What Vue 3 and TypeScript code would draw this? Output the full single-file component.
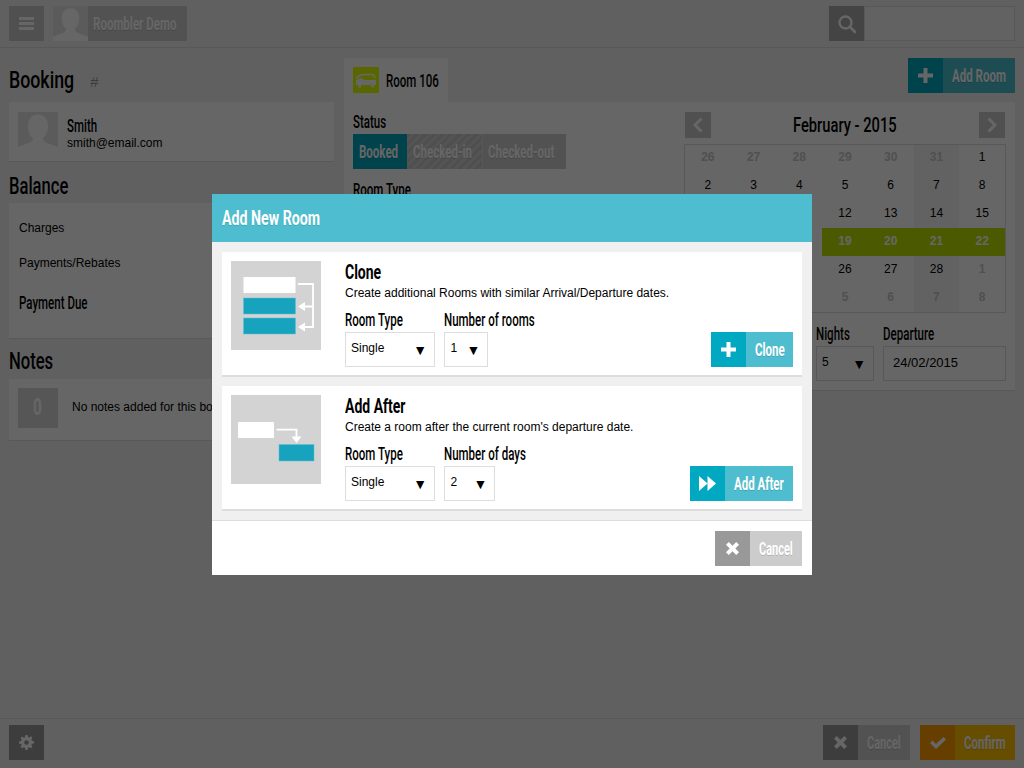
<script setup lang="ts">
interface Day { n: number; muted?: boolean; weekend?: boolean; on?: boolean }
const weeks: Day[][] = [
  [26, 27, 28, 29, 30, 31, 1],
  [2, 3, 4, 5, 6, 7, 8],
  [9, 10, 11, 12, 13, 14, 15],
  [16, 17, 18, 19, 20, 21, 22],
  [23, 24, 25, 26, 27, 28, 1],
  [2, 3, 4, 5, 6, 7, 8],
].map((row, r) =>
  row.map((n, c) => ({
    n,
    muted: r === 0 ? c < 6 : r === 4 ? c === 6 : r === 5,
    weekend: c === 5,
    on: r === 3 && c >= 3,
  })),
)
const days = weeks.flat()
</script>

<template>
  <div class="page">
    <header class="top">
      <div class="btn-icon menu">
        <svg width="15" height="13" viewBox="0 0 15 13"><path d="M0 0h15v3H0zM0 5h15v3H0zM0 10h15v3H0z" fill="#fff" /></svg>
      </div>
      <div class="brand">
        <svg class="avatar" viewBox="0 0 40 40"><rect width="40" height="40" fill="#e4e4e4" /><path d="M0 40V35l12-4.500c2-1 3-2 3-4.500-3-2-5-6-5-12C10 7 14 2.500 20 2.500S30 7 30 14c0 6-2 10-5 12 0 2.500 1 3.500 3 4.500l12 4.500v5z" fill="#fff" /></svg>
        <span class="brand-name"><span class="cond bold">Roombler Demo</span></span>
      </div>
      <div class="search">
        <div class="btn-icon search-btn">
          <svg width="20" height="20" viewBox="0 0 20 20"><circle cx="8.500" cy="8.500" r="6" fill="none" stroke="#fff" stroke-width="2.400" /><path d="M13 13l5 5" stroke="#fff" stroke-width="2.800" stroke-linecap="round" /></svg>
        </div>
        <div class="search-input"></div>
      </div>
    </header>

    <main class="main">
      <section class="left">
        <div class="h-row"><h1 class="cond h1 booking">Booking</h1><span class="hash">#</span></div>
        <div class="card guest">
          <svg class="thumb" viewBox="0 0 40 40"><rect width="40" height="40" fill="#e4e4e4" /><path d="M0 40V35l12-4.500c2-1 3-2 3-4.500-3-2-5-6-5-12C10 7 14 2.500 20 2.500S30 7 30 14c0 6-2 10-5 12 0 2.500 1 3.500 3 4.500l12 4.500v5z" fill="#fff" /></svg>
          <div>
            <div class="cond guest-name">Smith</div>
            <div class="sans email">smith@email.com</div>
          </div>
        </div>
        <h2 class="cond h1 h-balance">Balance</h2>
        <div class="card balance">
          <div class="sans bal-row">Charges</div>
          <div class="sans bal-row">Payments/Rebates</div>
          <div class="cond bal-due">Payment Due</div>
        </div>
        <h2 class="cond h1 h-notes">Notes</h2>
        <div class="card notes">
          <div class="count"><span class="cond bold">0</span></div>
          <div class="sans notes-text">No notes added for this booking</div>
        </div>
      </section>

      <section class="right">
        <div class="room-head">
          <div class="room-tab">
            <div class="bed">
              <svg width="22" height="15" viewBox="0 0 22 15"><path d="M1 5.500C4 2.500 6 1.500 9 1.500h9l2.500 3.500" fill="none" stroke="#fff" stroke-width="1.400" /><path d="M1 7l5-2 4 2h11v5h-2v2.500h-2.500V12H6v2.500H3.500V12H1z" fill="#fff" /></svg>
            </div>
            <span class="cond room-name">Room 106</span>
          </div>
          <div class="btn teal">
            <span class="ico"><svg width="15" height="15" viewBox="0 0 15 15"><path d="M5.500 0h4v5.500H15v4H9.500V15h-4V9.500H0v-4h5.500z" fill="#fff" /></svg></span>
            <span class="lab w-addroom"><span class="cond bold">Add Room</span></span>
          </div>
        </div>
        <div class="card room-card">
          <div class="room-col">
            <div class="cond label">Status</div>
            <div class="segments">
              <span class="seg seg-on"><span class="cond bold">Booked</span></span>
              <span class="seg seg-in"><span class="cond bold">Checked-in</span></span>
              <span class="seg seg-out"><span class="cond bold">Checked-out</span></span>
            </div>
            <div class="cond label room-type">Room Type</div>
          </div>
          <div class="room-col">
            <div class="cal-head">
              <span class="nav"><svg width="10" height="16" viewBox="0 0 10 16"><path d="M8.500 1.500L2 8l6.500 6.500" fill="none" stroke="#fff" stroke-width="3" /></svg></span>
              <span class="cal-title"><span class="cond month">February - 2015</span></span>
              <span class="nav"><svg width="10" height="16" viewBox="0 0 10 16"><path d="M1.500 1.500L8 8l-6.500 6.500" fill="none" stroke="#fff" stroke-width="3" /></svg></span>
            </div>
            <div class="cal sans">
              <span v-for="(d, i) in days" :key="i" class="day" :class="{ muted: d.muted, weekend: d.weekend, on: d.on }">{{ d.n }}</span>
            </div>
            <div class="dates">
              <div class="nights">
                <div class="cond label">Nights</div>
                <div class="select sans"><span>5</span><span class="arrow">▼</span></div>
              </div>
              <div class="departure">
                <div class="cond label">Departure</div>
                <div class="select date sans">24/02/2015</div>
              </div>
            </div>
          </div>
        </div>
      </section>
    </main>

    <footer class="bottom">
      <div class="btn-icon gear">
        <svg width="15" height="15" viewBox="0 0 16 16"><path d="M6.800 0h2.400l.4 2.100 1.300.5 1.800-1.200 1.700 1.700-1.200 1.800.5 1.300 2.300.4v2.400l-2.300.4-.5 1.300 1.200 1.800-1.700 1.700-1.800-1.200-1.300.5-.4 2.400H6.800l-.4-2.400-1.300-.5-1.800 1.200-1.700-1.700 1.200-1.800-.5-1.300L0 9.200V6.800l2.300-.4.500-1.300-1.200-1.800 1.700-1.700 1.800 1.200 1.300-.5zM8 5.500a2.500 2.500 0 100 5 2.500 2.500 0 000-5z" fill="#fff" fill-rule="evenodd" /></svg>
      </div>
      <div class="foot-actions">
        <div class="btn gray">
          <span class="ico"><svg width="13" height="13" viewBox="0 0 14 14"><path d="M3 0l4 4 4-4 3 3-4 4 4 4-3 3-4-4-4 4-3-3 4-4-4-4z" fill="#fff" /></svg></span>
          <span class="lab w-cancel"><span class="cond bold narrow">Cancel</span></span>
        </div>
        <div class="btn orange">
          <span class="ico"><svg width="16" height="12" viewBox="0 0 16 12"><path d="M0 6l2.500-2.500L6 7l7.500-7L16 2.500 6 12z" fill="#fff" /></svg></span>
          <span class="lab w-confirm"><span class="cond bold">Confirm</span></span>
        </div>
      </div>
    </footer>

    <div class="overlay"></div>

    <div class="modal">
      <div class="modal-head"><span class="cond bold modal-title">Add New Room</span></div>
      <div class="modal-body">
        <div class="opt">
          <svg class="diagram" width="90" height="89" viewBox="0 0 90 89">
            <rect width="90" height="89" fill="#d3d3d3" />
            <rect x="12.500" y="16" width="52" height="16" fill="#fff" />
            <rect x="12.500" y="37" width="52" height="16" fill="#17a3bd" stroke="#5fc0d2" stroke-width=".5" />
            <rect x="12.500" y="57" width="52" height="16" fill="#17a3bd" stroke="#5fc0d2" stroke-width=".5" />
            <path d="M67 23h15v43H72M82 45.500H72" fill="none" stroke="#fff" stroke-width="1.800" />
            <path d="M67 45.500l7-4.500v9zM67 66l7-4.500v9z" fill="#fff" />
          </svg>
          <div class="opt-text">
            <h3 class="cond opt-title">Clone</h3>
            <p class="sans opt-desc">Create additional Rooms with similar Arrival/Departure dates.</p>
            <div class="opt-row">
              <div class="fields">
                <div>
                  <div class="cond label">Room Type</div>
                  <div class="select sans w-type"><span>Single</span><span class="arrow">▼</span></div>
                </div>
                <div>
                  <div class="cond label">Number of rooms</div>
                  <div class="select sans w-num"><span>1</span><span class="arrow">▼</span></div>
                </div>
              </div>
              <div class="btn cyan">
                <span class="ico"><svg width="15" height="15" viewBox="0 0 15 15"><path d="M5.500 0h4v5.500H15v4H9.500V15h-4V9.500H0v-4h5.500z" fill="#fff" /></svg></span>
                <span class="lab w-clone"><span class="cond bold">Clone</span></span>
              </div>
            </div>
          </div>
        </div>
        <div class="opt">
          <svg class="diagram" width="90" height="89" viewBox="0 0 90 89">
            <rect width="90" height="89" fill="#d3d3d3" />
            <rect x="7" y="27" width="36" height="16" fill="#fff" />
            <rect x="48" y="49.500" width="35" height="16.500" fill="#17a3bd" stroke="#5fc0d2" stroke-width=".5" />
            <path d="M45.500 34.700H65.500V42" fill="none" stroke="#fff" stroke-width="1.800" />
            <path d="M65.500 48l-5-6.500h10z" fill="#fff" />
          </svg>
          <div class="opt-text">
            <h3 class="cond opt-title">Add After</h3>
            <p class="sans opt-desc">Create a room after the current room's departure date.</p>
            <div class="opt-row">
              <div class="fields">
                <div>
                  <div class="cond label">Room Type</div>
                  <div class="select sans w-type"><span>Single</span><span class="arrow">▼</span></div>
                </div>
                <div>
                  <div class="cond label">Number of days</div>
                  <div class="select sans w-days"><span>2</span><span class="arrow">▼</span></div>
                </div>
              </div>
              <div class="btn cyan">
                <span class="ico"><svg width="17" height="15" viewBox="0 0 17 15"><path d="M0 0l8.500 7.500L0 15zM8.500 0L17 7.500 8.500 15z" fill="#fff" /></svg></span>
                <span class="lab w-addafter"><span class="cond bold">Add After</span></span>
              </div>
            </div>
          </div>
        </div>
      </div>
      <div class="modal-foot">
        <div class="btn gray">
          <span class="ico"><svg width="13" height="13" viewBox="0 0 14 14"><path d="M3 0l4 4 4-4 3 3-4 4 4 4-3 3-4-4-4 4-3-3 4-4-4-4z" fill="#fff" /></svg></span>
          <span class="lab w-cancel"><span class="cond bold narrow">Cancel</span></span>
        </div>
      </div>
    </div>
  </div>
</template>

<style>
html, body { margin: 0; }
</style>

<style scoped>
.page { position: relative; width: 1024px; height: 768px; overflow: hidden; display: flex; flex-direction: column; background: #f0f0f0; color: #000; }
.cond { font-family: Roboto, sans-serif; font-weight: 500; white-space: nowrap; width: max-content; display: block; transform: scaleX(.64); transform-origin: left center; }
.bold { font-weight: 700; }
.narrow { transform: scaleX(.61); }
.sans { font-family: "Liberation Sans", Arial, sans-serif; font-size: 12px; }
h1, h2, h3, p { margin: 0; font-weight: normal; }

.top { height: 48px; box-sizing: border-box; flex: none; display: flex; align-items: flex-start; padding: 6px 9px 0; gap: 9px; border-bottom: 1px solid #ddd; }
.btn-icon { width: 35px; height: 35px; flex: none; display: flex; align-items: center; justify-content: center; }
.menu { background: #c8c8c8; }
.search-btn { background: #aaa; }
.gear { background: #999; }
.brand { display: flex; height: 35px; }
.avatar { width: 35px; height: 35px; display: block; }
.brand-name { width: 94px; padding-left: 5px; background: #ccc; color: #fff; font-size: 18px; line-height: 35px; text-shadow: 0 1px 0 rgba(0,0,0,.15); }
.search { margin-left: auto; display: flex; }
.search-input { width: 151px; height: 35px; box-sizing: border-box; border: 1px solid #ddd; background: #f4f4f4; }

.main { flex: 1; display: flex; gap: 10px; padding: 10px 9px 0; min-height: 0; }
.left { width: 325px; flex: none; }
.right { flex: 1; min-width: 0; }
.card { background: #fff; border-bottom: 1px solid #ddd; box-sizing: border-box; }
.h-row { height: 44px; display: flex; align-items: center; }
.h1 { font-size: 24px; line-height: 44px; transform: scaleX(.69); }
.booking { transform: scaleX(.74); width: 86px; margin-right: -5px; }
.hash { font: italic 15px "Liberation Sans", sans-serif; color: #999; margin-top: 2px; }
.guest { height: 60px; display: flex; align-items: center; gap: 9px; padding: 0 9px; }
.thumb { width: 40px; height: 40px; display: block; }
.guest-name { font-size: 18px; line-height: 24px; padding-top: 1px; margin-bottom: -2px; }
.email { line-height: 15px; }
.h-balance { height: 41px; line-height: 48px; }
.balance { height: 136px; padding: 0 10px; }
.bal-row { height: 35px; line-height: 50px; }
.bal-due { font-size: 18px; line-height: 60px; height: 60px; }
.h-notes { height: 40px; line-height: 45px; }
.notes { height: 62px; display: flex; align-items: flex-start; gap: 14px; padding: 9px 9px 0; }
.notes-text { line-height: 38px; }
.count { width: 40px; height: 40px; background: #d8d8d8; color: #fff; font-size: 24px; line-height: 38px; padding-left: 15px; box-sizing: border-box; }

.room-head { height: 44px; display: flex; justify-content: space-between; align-items: flex-start; }
.room-tab { width: 104px; height: 44px; box-sizing: border-box; background: #fff; display: flex; align-items: center; gap: 7px; padding: 0 9px; }
.bed { width: 26px; height: 26px; flex: none; display: flex; align-items: center; justify-content: center; background: #e2ff00; }
.room-name { font-size: 18px; line-height: 24px; padding-top: 2px; }
.room-card { display: flex; gap: 9px; padding: 10px 9px 9px; height: 289px; }
.room-col { width: 322px; flex: none; }
.label { font-size: 18px; line-height: 20px; height: 22px; }
.segments { display: flex; height: 35px; color: #fff; font-size: 18px; line-height: 35px; }
.seg { display: block; padding-left: 6px; box-sizing: border-box; text-shadow: 0 1px 0 rgba(0,0,0,.15); }
.seg-on { width: 54px; background: #00a9c1; }
.seg-in { width: 75px; background: repeating-linear-gradient(135deg, #c6c6c6 0 3px, #d2d2d2 3px 6px); }
.seg-out { width: 84px; background: #ccc; border-left: 1px solid #ddd; padding-left: 5px; }
.room-type { margin-top: 11px; }

.cal-head { height: 26px; display: flex; justify-content: space-between; align-items: center; padding: 0 1px; margin-bottom: 6px; }
.nav { width: 26px; height: 26px; background: #c8c8c8; display: flex; align-items: center; justify-content: center; }
.cal-title { width: 104px; font-size: 21px; line-height: 26px; }
.month { transform: scaleX(.7); }
.cal { display: grid; grid-template-columns: repeat(7, 1fr); grid-auto-rows: 28px; padding: 0 1px; height: 169px; box-sizing: border-box; outline: 1px solid #ddd; outline-offset: -1px; }
.day { text-align: center; line-height: 26px; }
.day.weekend { background: #f5f5f5; }
.day.muted { color: #c8c8c8; font-weight: bold; }
.day.on { background: #bce000; color: #fff; font-weight: bold; }
.dates { display: flex; justify-content: flex-end; gap: 9px; margin-top: 11px; }
.nights .select { width: 58px; }
.departure .select { width: 123px; }
.dates .label { height: 23px; line-height: 22px; margin-top: -1px; }
.select { height: 35px; box-sizing: border-box; border: 1px solid #ddd; display: flex; align-items: center; justify-content: space-between; padding: 0 7px 3px 5px; background: #fff; }
.date { padding-left: 9px; font-size: 13px; }
.arrow { font-size: 14px; padding-top: 4px; }

.btn { display: flex; height: 35px; flex: none; color: #fff; }
.ico { width: 35px; height: 35px; display: flex; align-items: center; justify-content: center; flex: none; }
.lab { padding-left: 9px; box-sizing: border-box; font-size: 18px; line-height: 35px; text-shadow: 0 1px 0 rgba(0,0,0,.15); }
.w-addroom { width: 72px; }
.w-cancel { width: 52px; }
.w-confirm { width: 60px; }
.w-clone { width: 47px; }
.w-addafter { width: 68px; }
.teal .ico, .cyan .ico { background: #00a9c1; }
.teal .lab, .cyan .lab { background: #4dbdcf; }
.gray .ico { background: #999; }
.gray .lab { background: #ccc; }
.orange .ico { background: #ff9e00; }
.orange .lab { background: #ffc000; }

.bottom { height: 50px; flex: none; box-sizing: border-box; border-top: 1px solid #ddd; padding: 6px 9px 0; display: flex; justify-content: space-between; }
.foot-actions { display: flex; gap: 10px; }

.overlay { position: absolute; inset: 0; background: rgba(0,0,0,.6); }
.modal { position: absolute; left: 212px; top: 194px; width: 600px; background: #fff; }
.modal-head { height: 48px; background: #4dbdcf; color: #fff; font-size: 20px; line-height: 48px; padding-left: 10px; text-shadow: 0 1px 0 rgba(0,0,0,.15); }
.modal-title { transform: scaleX(.71); }
.modal-body { background: #f0f0f0; padding: 10px 10px 9px; display: flex; flex-direction: column; gap: 9px; border-bottom: 1px solid #ddd; }
.opt { background: #fff; height: 125px; box-sizing: border-box; border-bottom: 2px solid #ddd; padding: 9px; display: flex; gap: 24px; }
.diagram { display: block; flex: none; }
.opt-text { flex: 1; min-width: 0; }
.opt-title { font-size: 20px; font-weight: 700; line-height: 22px; transform: scaleX(.7); }
.opt-desc { line-height: 20px; }
.opt-row { display: flex; justify-content: space-between; align-items: flex-end; margin-top: 6px; }
.fields { display: flex; gap: 9px; }
.opt-row .label { height: 23px; line-height: 22px; }
.w-type { width: 90px; }
.w-num { width: 44px; }
.w-days { width: 51px; }
.modal-foot { height: 54px; box-sizing: border-box; padding: 10px; display: flex; justify-content: flex-end; }
</style>
